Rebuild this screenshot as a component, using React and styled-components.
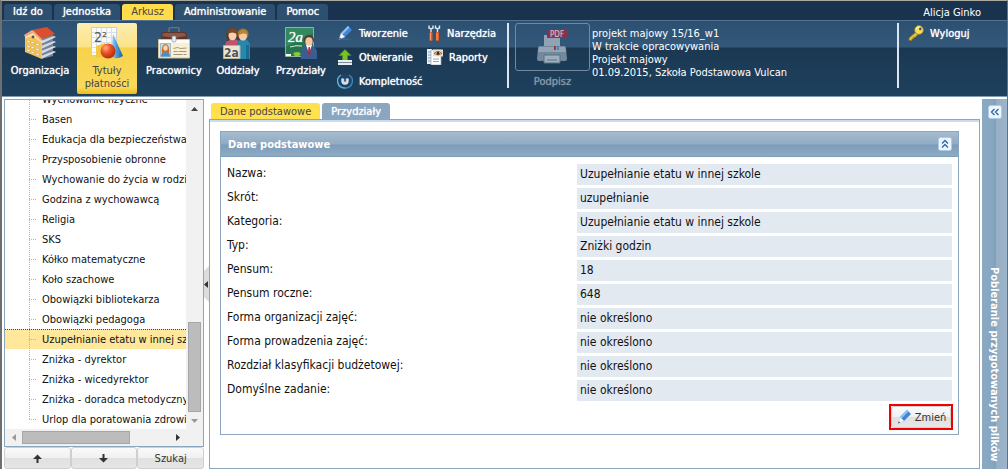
import React, { useState } from 'react'
import styled, { createGlobalStyle } from 'styled-components'

const menu = ['Idź do', 'Jednostka', 'Arkusz', 'Administrowanie', 'Pomoc']

const subjects = [
    'Wychowanie fizyczne',
    'Basen',
    'Edukacja dla bezpieczeństwa',
    'Przysposobienie obronne',
    'Wychowanie do życia w rodzinie',
    'Godzina z wychowawcą',
    'Religia',
    'SKS',
    'Kółko matematyczne',
    'Koło szachowe',
    'Obowiązki bibliotekarza',
    'Obowiązki pedagoga',
    'Uzupełnianie etatu w innej szkole',
    'Zniżka - dyrektor',
    'Zniżka - wicedyrektor',
    'Zniżka - doradca metodyczny',
    'Urlop dla poratowania zdrowia',
]

const details = [
    ['Nazwa:', 'Uzupełnianie etatu w innej szkole'],
    ['Skrót:', 'uzupełnianie'],
    ['Kategoria:', 'Uzupełnianie etatu w innej szkole'],
    ['Typ:', 'Zniżki godzin'],
    ['Pensum:', '18'],
    ['Pensum roczne:', '648'],
    ['Forma organizacji zajęć:', 'nie określono'],
    ['Forma prowadzenia zajęć:', 'nie określono'],
    ['Rozdział klasyfikacji budżetowej:', 'nie określono'],
    ['Domyślne zadanie:', 'nie określono'],
]

const BuildingIcon = () => (
    <svg width="32" height="32" viewBox="0 0 32 32">
        <path d="M17 11l12-3v21l-12 3z" fill="#76859a" />
        <path d="M17 14l13-5 2 1-15 7zM17 19l13-5 2 1-15 7zM17 24l13-5 2 1-15 7zM17 29l13-5 2 1-15 7z" fill="#d5dce3" />
        <path d="M1 8l8-3 9 8v19L1 25z" fill="#f3c45c" />
        <path d="M1 8l8-3 9 8v3L9 9 1 11z" fill="#ffe3a0" />
        <path d="M3 13l3 1v2l-3-1zM7 14l3 1v2l-3-1zM12 16l3 1v2l-3-1zM3 18l3 1v2l-3-1zM7 19l3 1v2l-3-1zM12 21l3 1v2l-3-1zM3 22l3 1v2l-3-1zM7 24l3 1v2l-3-1zM12 26l3 1v2l-3-1z" fill="#fffdf0" stroke="#b98e3a" strokeWidth=".4" />
        <circle cx="9" cy="10" r="1.4" fill="#5b5648" />
        <path d="M8 3L23 0l8 7-13 5-8-8z" fill="#d8502f" />
        <path d="M0 8l8-5 2 1 8 8-1 2-8-8-8 4z" fill="#f0a385" />
    </svg>
)

const MathIcon = () => (
    <svg width="32" height="32" viewBox="0 0 32 32">
        <defs>
            <radialGradient id="ball" cx=".35" cy=".3" r=".8">
                <stop offset="0" stopColor="#ffb08a" />
                <stop offset=".4" stopColor="#ee5526" />
                <stop offset="1" stopColor="#a3240c" />
            </radialGradient>
            <linearGradient id="cone">
                <stop offset="0" stopColor="#a9dcf7" />
                <stop offset=".5" stopColor="#4796d2" />
                <stop offset="1" stopColor="#1f5f9f" />
            </linearGradient>
        </defs>
        <path d="M.5.5h25v28H.5z" fill="#fafafa" stroke="#c9ced6" />
        <path d="M5.500 1v27M10.500 1v27M15.500 1v27M20.500 1v27M1 5.500h24M1 10.500h24M1 15.500h24M1 20.500h24M1 25.500h24" stroke="#d9dfe8" />
        <text x="3" y="15" fontFamily="DejaVu Sans Condensed" fontSize="14" fill="#555">2²</text>
        <path d="M5 19l9-3v13l-9 2z" fill="#f5c842" />
        <path d="M22 7l10 22q-6 4-12 1z" fill="url(#cone)" />
        <circle cx="17" cy="24" r="7.500" fill="url(#ball)" />
    </svg>
)

const StaffIcon = () => (
    <svg width="32" height="32" viewBox="0 0 32 32">
        <path d="M11 5V2q0-1.500 1.500-1.500h7Q21 .5 21 2v3" fill="none" stroke="#6b7078" strokeWidth="1.500" />
        <path d="M3 16V8q0-3 3-3h20q3 0 3 3v8z" fill="#5d352b" />
        <path d="M4 9q0-3 3-3h18q3 0 3 3l-12 2z" fill="#8a5748" />
        <path d="M.5 12.500h31v18.500H.5z" fill="#f8efd5" stroke="#d0c19a" />
        <path d="M1 13h30v3H1z" fill="#fffdf5" />
        <rect x="14" y="9" width="4" height="6" rx="1.500" fill="#e8edf4" stroke="#8290a5" strokeWidth=".7" />
        <path d="M2.500 16.500h10v13h-10z" fill="#b9dff5" stroke="#7d9ab0" strokeWidth=".6" />
        <path d="M4 27q-1-10 3.500-10T11 27z" fill="#c96b2c" />
        <ellipse cx="7.500" cy="21" rx="2.200" ry="2.800" fill="#f8d3b0" />
        <path d="M3 29.500q0-4.500 4.500-4.500t4.500 4.500z" fill="#4d8fc2" />
        <path d="M15.500 21.500l4-1 3 1 6-.5M15.500 24.500h4m1 0h8M15.500 27.500h9m1 0h3" stroke="#8b7e64" strokeWidth=".8" fill="none" />
    </svg>
)

const ClassIcon = () => (
    <svg width="32" height="32" viewBox="0 0 32 32">
        <path d="M3 20q0-8 8-8 7 0 7 8z" fill="#c2536c" />
        <path d="M15 31V18q1-6 6-6 7 0 7 8v12H18z" fill="#2688ad" />
        <path d="M24 18h3v14h-3z" fill="#1a6c92" />
        <circle cx="10.500" cy="6.500" r="6" fill="#6b4228" />
        <path d="M4 6h3v8H5zM14 6h3v7h-2z" fill="#5e3823" />
        <ellipse cx="10.500" cy="8.500" rx="4" ry="4.800" fill="#f6d3b0" />
        <path d="M6 7q1-5 5-5t4 5q-5-3-9 0z" fill="#7a4b2c" />
        <circle cx="21" cy="7" r="5.500" fill="#a8752e" />
        <ellipse cx="21" cy="9" rx="4" ry="4.700" fill="#f4cba4" />
        <path d="M17 8q1-5 4-5t5 5q-4-3-9 0z" fill="#bd8637" />
        <path d="M1.500 18.500h16.500v13H1.500z" fill="#e9e7d4" stroke="#b5b39d" />
        <text x="2" y="30" fontFamily="DejaVu Sans Condensed" fontWeight="bold" fontSize="12" fill="#4f5350">2a</text>
    </svg>
)

const BoardIcon = () => (
    <svg width="32" height="32" viewBox="0 0 32 32">
        <path d="M.5.500h28v29H.5z" fill="#25754f" stroke="#8eb59b" />
        <path d="M1 1h27v5L1 20z" fill="#33895f" />
        <text x="3" y="15" fontFamily="Liberation Serif" fontStyle="italic" fontSize="15" fill="#fff">2a</text>
        <path d="M5 20q6-2 12-1" stroke="#d6ecdf" fill="none" />
        <path d="M1 27h5v2H1z" fill="#fff" />
        <ellipse cx="12" cy="27" rx="3.500" ry="2" fill="#8fc63c" />
        <path d="M16 32V24q1-6 7.500-6t8.500 6v8z" fill="#3c5d94" />
        <path d="M21 18l3 8 3-8z" fill="#fff" />
        <path d="M23.500 20h1.500l.5 6-1.500 2-1-2z" fill="#b32b25" />
        <circle cx="24" cy="13" r="5" fill="#503a2d" />
        <ellipse cx="24" cy="14.500" rx="3.700" ry="4.300" fill="#f2c9a2" />
    </svg>
)

const PencilIcon = ({ shadow }) => (
    <svg width="16" height="16" viewBox="0 0 16 16">
        {shadow && <path d="M3 14.500q5-1.500 11-.5l-4 1.500z" fill="#2d6cb0" opacity=".8" />}
        <path d="M11 1l4 4-7 7-4-4z" fill="#3f86d8" />
        <path d="M11 1l1.500 1.500-7 7L4 8z" fill="#8fc3f5" />
        <path d="M4 8l4 4-6 2.500z" fill="#f6f8fa" stroke="#a9bccd" strokeWidth=".4" />
        <path d="M2.800 12.400L2 14.500l2.200-.9z" fill="#1f4680" />
    </svg>
)

const OpenIcon = () => (
    <svg width="16" height="16" viewBox="0 0 16 16">
        <path d="M8 .5l6 6h-3.500v5h-5v-5H2z" fill="#79c22c" stroke="#4d8f15" strokeWidth=".7" />
        <path d="M1 11h14v5H1z" fill="#e8edf2" />
        <path d="M1 13.500h14" stroke="#7d8b99" />
    </svg>
)

const PowerIcon = () => (
    <svg width="16" height="16" viewBox="0 0 16 16">
        <circle cx="8" cy="8" r="7" fill="#1c4468" />
        <path d="M4 2A7 7 0 0 0 8 15" fill="none" stroke="#5cb4e6" strokeWidth="1.400" />
        <path d="M12 2A7 7 0 0 1 8 15" fill="none" stroke="#3c88bd" strokeWidth="1.400" />
        <path d="M5 5.500v2.500a3 3 0 0 0 6 0V5.500" fill="#c9d3dc" stroke="#dfe6ec" strokeWidth="1.400" />
        <path d="M8 4v4.500" stroke="#1c4468" strokeWidth="1.600" />
    </svg>
)

const ToolsIcon = () => (
    <svg width="14" height="16" viewBox="0 0 14 16">
        <path d="M2 .5v2.500l2 1 2-1V.5M4 4v4M8.500 .5v2.500l2 1 2-1V.5M10.500 4v4" fill="none" stroke="#e3e8ed" strokeWidth="1.400" />
        <rect x="2.500" y="7" width="3" height="9" rx="1" fill="#ea5a22" />
        <rect x="9" y="7" width="3" height="9" rx="1" fill="#ea5a22" />
        <path d="M3.500 8v7M10 8v7" stroke="#ffac80" strokeWidth=".8" />
    </svg>
)

const ReportIcon = () => (
    <svg width="16" height="16" viewBox="0 0 16 16">
        <path d="M0 0h5v15H0z" fill="#eef1f4" />
        <path d="M1 3h3M1 6h3M1 9h3M1 12h3" stroke="#8a9bad" />
        <path d="M4 1h10v15H4z" fill="#fff" stroke="#9baaba" strokeWidth=".7" />
        <path d="M6 10h6M6 12.500h6" stroke="#9aa8b6" />
        <path d="M6 .5h10v7H6z" fill="#f0dcc0" />
        <path d="M7 4.500q4-4 8 0-4 3-8 0z" fill="#fff" stroke="#6b4a34" strokeWidth=".8" />
        <circle cx="11" cy="4.300" r="1.500" fill="#3f2a1d" />
    </svg>
)

const KeyIcon = () => (
    <svg width="16" height="16" viewBox="0 0 16 16">
        <path d="M8.500 6.500L1 13v2.500h3V14h1.500v-1.500H7L10.500 9z" fill="#e3bf35" stroke="#8f7113" strokeWidth=".7" />
        <circle cx="11" cy="5" r="4.400" fill="#f4dc5e" stroke="#9a7c1c" strokeWidth=".8" />
        <path d="M8 4q1-2.500 4-2" stroke="#fffbd0" fill="none" />
        <circle cx="12.300" cy="3.900" r="1.300" fill="#42586b" />
    </svg>
)

const PrinterIcon = () => (
    <svg width="34" height="36" viewBox="0 0 34 36">
        <path d="M8 5h16v12H8z" fill="#8fa3b4" />
        <path d="M2 18q0-2 2-2h24q2 0 2 2l1 11q0 2-2 2H3q-2 0-2-2z" fill="#74899c" />
        <path d="M3 17h26l1 5H2z" fill="#93a5b4" />
        <path d="M8 25h16v8H8z" fill="#9fafbc" stroke="#56708a" />
        <path d="M11 30h10" stroke="#56708a" />
        <path d="M18 16h2v4h-2z" fill="#a03548" />
        <path d="M21 16h2v4h-2z" fill="#3e8ab4" />
        <path d="M11 0h21v8H11z" fill="#8b3049" />
        <text x="14" y="7" fontFamily="DejaVu Sans Condensed" fontSize="8" fill="#cdb9c3">PDF</text>
    </svg>
)

const ChevronBox = ({ up }) => (
    <svg width="14" height="14" viewBox="0 0 14 14">
        <rect x=".5" y=".5" width="13" height="13" rx="2" fill="#eef5fd" stroke="#a9cbec" />
        <path
            d={up ? 'M4 6.500l3-3 3 3M4 10.500l3-3 3 3' : 'M6.500 4l-3 3 3 3M10.500 4l-3 3 3 3'}
            fill="none"
            stroke="#2f68a8"
            strokeWidth="1.400"
        />
    </svg>
)

const arrows = {
    up: 'M0 5l5-5 5 5z',
    down: 'M0 0h10L5 5z',
    left: 'M5 0v10L0 5z',
    right: 'M0 0l5 5-5 5z',
}

const Triangle = ({ dir, color }) => {
    const tall = dir === 'left' || dir === 'right'
    return (
        <svg width={tall ? 4 : 7} height={tall ? 7 : 4} viewBox={tall ? '0 0 5 10' : '0 0 10 5'} preserveAspectRatio="none">
            <path d={arrows[dir]} fill={color} />
        </svg>
    )
}

const BoldArrow = ({ down }) => (
    <svg width="9" height="9" viewBox="0 0 9 9">
        <path d={down ? 'M3.500 0h2v4H9L4.500 8.500 0 4h3.500z' : 'M3.500 9h2V5H9L4.500.5 0 5h3.500z'} fill="#333" />
    </svg>
)

const App = () => {
    const [selected, setSelected] = useState(12)

    return (
        <Window>
            <GlobalStyle />
            <MenuBar>
                {menu.map(name => (
                    <MenuTab key={name} $active={name === 'Arkusz'}>{name}</MenuTab>
                ))}
                <UserName>Alicja Ginko</UserName>
            </MenuBar>

            <Ribbon>
                <BigButton $width={74}><BuildingIcon />Organizacja</BigButton>
                <BigButton $width={60} $active><MathIcon />Tytuły płatności</BigButton>
                <BigButton $width={74}><StaffIcon />Pracownicy</BigButton>
                <BigButton $width={54}><ClassIcon />Oddziały</BigButton>
                <BigButton $width={72}><BoardIcon />Przydziały</BigButton>
                <ToolGrid>
                    <Tool><PencilIcon shadow />Tworzenie</Tool>
                    <Tool><ToolsIcon />Narzędzia</Tool>
                    <Tool><OpenIcon />Otwieranie</Tool>
                    <Tool><ReportIcon />Raporty</Tool>
                    <Tool><PowerIcon />Kompletność</Tool>
                </ToolGrid>
                <Divider />
                <SignButton disabled>
                    <SignFrame><PrinterIcon /></SignFrame>
                    Podpisz
                </SignButton>
                <ProjectInfo>
                    <div>projekt majowy 15/16_w1</div>
                    <div>W trakcie opracowywania</div>
                    <div>Projekt majowy</div>
                    <div>01.09.2015, Szkoła Podstawowa Vulcan</div>
                </ProjectInfo>
                <Divider />
                <Session>
                    <Tool><KeyIcon />Wyloguj</Tool>
                </Session>
            </Ribbon>

            <Workspace>
                <Sidebar>
                    <TreeFrame>
                        <Tree>
                            {subjects.map((name, i) => (
                                <Item key={name} $selected={i === selected} onClick={() => setSelected(i)}>
                                    <Branch $last={i === subjects.length - 1} />
                                    {name}
                                </Item>
                            ))}
                        </Tree>
                        <VerticalScroll>
                            <ArrowSlot><Triangle dir="up" color="#444" /></ArrowSlot>
                            <VerticalThumb />
                            <ArrowSlot><Triangle dir="down" color="#999" /></ArrowSlot>
                        </VerticalScroll>
                        <HorizontalScroll>
                            <ArrowSlot><Triangle dir="left" color="#999" /></ArrowSlot>
                            <HorizontalThumb />
                            <ArrowSlot><Triangle dir="right" color="#333" /></ArrowSlot>
                        </HorizontalScroll>
                        <ScrollCorner />
                    </TreeFrame>
                    <SidebarButtons>
                        <GreyButton aria-label="Do góry"><BoldArrow /></GreyButton>
                        <GreyButton aria-label="W dół"><BoldArrow down /></GreyButton>
                        <GreyButton>Szukaj</GreyButton>
                    </SidebarButtons>
                </Sidebar>

                <Splitter>
                    <SplitterHandle aria-label="Zwiń"><Triangle dir="left" color="#333" /></SplitterHandle>
                </Splitter>

                <Main>
                    <PageTabs>
                        <PageTab $active>Dane podstawowe</PageTab>
                        <PageTab>Przydziały</PageTab>
                    </PageTabs>
                    <Page>
                        <Panel>
                            <PanelHeader>
                                <h2>Dane podstawowe</h2>
                                <IconButton aria-label="Zwiń panel"><ChevronBox up /></IconButton>
                            </PanelHeader>
                            <Details>
                                {details.map(([label, value]) => (
                                    <Detail key={label}>
                                        <dt>{label}</dt>
                                        <dd>{value}</dd>
                                    </Detail>
                                ))}
                            </Details>
                            <PanelFooter>
                                <Highlight>
                                    <GreyButton><PencilIcon />Zmień</GreyButton>
                                </Highlight>
                            </PanelFooter>
                        </Panel>
                    </Page>
                </Main>

                <Downloads>
                    <IconButton aria-label="Rozwiń"><ChevronBox /></IconButton>
                    <DownloadsTitle>Pobieranie przygotowanych plików</DownloadsTitle>
                </Downloads>
            </Workspace>
        </Window>
    )
}

export default App


const GlobalStyle = createGlobalStyle`
    *{
        box-sizing: border-box;
    }

    body{
        margin: 0;
        background: #fff;
        color: #111;
        font: 11px/13px "DejaVu Sans Condensed", "Noto Sans", sans-serif;
    }

    button{
        margin: 0;
        padding: 0;
        border: 0;
        background: none;
        color: inherit;
        font: inherit;
        cursor: pointer;
    }

    svg{
        display: block;
        flex: none;
    }
`

const Window = styled.div`
    display: flex;
    flex-direction: column;
    height: 100vh;
    border: solid #6f6f6f;
    border-width: 1px 1px 0 2px;
    border-top-color: #a9a99f;
`

// Top menu
const MenuBar = styled.nav`
    display: flex;
    flex: none;
    align-items: flex-end;
    gap: 2px;
    height: 19px;
    padding: 0 26px 0 2px;
    background: #19334e;
`

const MenuTab = styled.button`
    height: 16px;
    padding: 0 9px 1px;
    border-radius: 3px 3px 0 0;
    background: ${props => props.$active ? '#ffdc4c' : '#2d5070'};
    color: ${props => props.$active ? '#444' : '#fff'};
    text-shadow: ${props => props.$active ? 'none' : '0 0 1px #fff'};
    white-space: nowrap;
`

const UserName = styled.span`
    margin-left: auto;
    padding-bottom: 1px;
    color: #fff;
`

// Ribbon
const Ribbon = styled.header`
    display: flex;
    flex: none;
    align-items: flex-start;
    height: 77px;
    padding: 2px 0 0 1px;
    border-top: 1px solid #55728e;
    border-bottom: 1px solid #7f9cb5;
    background: linear-gradient(#2c5072, #33587a 26px, #1b3852 27px, #1e415e);
    color: #fff;
`

const BigButton = styled.button`
    display: flex;
    flex: none;
    flex-direction: column;
    align-items: center;
    gap: 5px;
    width: ${props => props.$width}px;
    height: 71px;
    padding-top: 4px;
    border-radius: 2px;
    background: ${props => props.$active ? 'linear-gradient(#fdeeb0, #fbe387 24px, #f8d24a 25px, #f9d95c 64px, #f0bd10)' : 'none'};
    color: ${props => props.$active ? '#444' : '#fff'};
    text-shadow: ${props => props.$active ? 'none' : '0 0 1px #fff'};
`

const ToolGrid = styled.div`
    display: grid;
    flex: none;
    grid-template-columns: 90px 80px;
    grid-auto-rows: 24px;
    margin-top: -2px;
`

const Tool = styled.button`
    display: flex;
    align-items: center;
    gap: 6px;
    height: 24px;
    color: #fff;
    text-shadow: 0 0 1px #fff;
    white-space: nowrap;
`

const Divider = styled.div`
    flex: none;
    width: 2px;
    height: 65px;
    background: #dbe6ef;
`

const SignButton = styled.button`
    display: flex;
    flex: none;
    flex-direction: column;
    gap: 4px;
    align-items: center;
    margin-left: 6px;
    color: #8496a6;
    text-shadow: 0 0 1px #8496a6;
`

const SignFrame = styled.span`
    display: flex;
    justify-content: center;
    width: 75px;
    height: 48px;
    padding-top: 6px;
    border: 1px solid #7389a0;
    border-radius: 3px;
`

const ProjectInfo = styled.div`
    flex: 1;
    min-width: 0;
    padding: 4px 2px;
    overflow: hidden;
    white-space: nowrap;
`

const Session = styled.div`
    flex: none;
    width: 108px;
    margin-top: -2px;
    padding-left: 9px;
`

// Workspace
const Workspace = styled.div`
    display: flex;
    flex: 1;
    min-height: 0;
    padding: 2px 0 0 2px;
`

const Sidebar = styled.aside`
    display: flex;
    flex: none;
    flex-direction: column;
    width: 200px;
`

const TreeFrame = styled.div`
    display: grid;
    flex: 1;
    grid-template: minmax(0, 1fr) 17px / minmax(0, 1fr) 17px;
    min-height: 0;
    border: 1px solid #8ba7c0;
`

const Tree = styled.ul`
    display: flex;
    flex-direction: column;
    justify-content: flex-end;
    margin: 0;
    padding: 0;
    overflow: hidden;
    list-style: none;
`

const Item = styled.li`
    display: flex;
    flex: none;
    align-items: center;
    height: 20px;
    border-top: 1px ${props => props.$selected ? 'dotted #444' : 'solid transparent'};
    background: ${props => props.$selected ? '#ffe79b' : 'none'};
    white-space: nowrap;
    cursor: pointer;
`

const Branch = styled.span`
    flex: none;
    align-self: stretch;
    width: 7px;
    margin: 0 6px 0 24px;
    background:
        repeating-linear-gradient(#b5b5b5 0 1px, transparent 1px 2px) 0 0 / 1px ${props => props.$last ? '10px' : '100%'} no-repeat,
        repeating-linear-gradient(to right, #b5b5b5 0 1px, transparent 1px 2px) 0 9px / 7px 1px no-repeat;
`

const VerticalScroll = styled.div`
    display: flex;
    flex-direction: column;
    align-items: center;
    background: #f1f1f1;
`

const HorizontalScroll = styled.div`
    display: flex;
    align-items: center;
    background: #f1f1f1;
`

const ArrowSlot = styled.span`
    display: flex;
    flex: none;
    align-items: center;
    justify-content: center;
    width: 17px;
    height: 17px;
`

const VerticalThumb = styled.div`
    width: 13px;
    height: 90px;
    margin-top: auto;
    border: 1px solid #a6a6a6;
    background: #bcbcbc;
`

const HorizontalThumb = styled.div`
    width: 108px;
    height: 13px;
    margin-right: auto;
    border: 1px solid #a6a6a6;
    background: #bcbcbc;
`

const ScrollCorner = styled.div`
    background: #f1f1f1;
`

const GreyButton = styled.button`
    display: flex;
    align-items: center;
    justify-content: center;
    gap: 3px;
    height: 22px;
    border: 1px solid #cfcfcf;
    border-radius: 3px;
    background: linear-gradient(#fafafa, #f0f0f0 50%, #e0e0e0 51%, #e6e6e6);
    color: #333;
`

const SidebarButtons = styled.div`
    display: grid;
    grid-template-columns: repeat(3, 1fr);
`

const Splitter = styled.div`
    display: flex;
    flex: none;
    align-items: center;
    width: 5px;
`

const SplitterHandle = styled.button`
    width: 5px;
    height: 36px;
    background: #dcdcdc;
    clip-path: polygon(0 5px, 100% 0, 100% 100%, 0 31px);
`

// Page
const Main = styled.main`
    display: flex;
    flex: 1;
    flex-direction: column;
    min-width: 0;
    padding-top: 4px;
`

const PageTabs = styled.div`
    display: flex;
    gap: 2px;
    padding-left: 2px;
`

const PageTab = styled.button`
    height: 16px;
    padding: 0 9px;
    border-radius: 3px 3px 0 0;
    background: ${props => props.$active ? '#ffe04d' : '#8ba7c0'};
    color: ${props => props.$active ? '#444' : '#fff'};
    text-shadow: ${props => props.$active ? 'none' : '0 0 1px #fff'};
`

const Page = styled.div`
    flex: 1;
    min-height: 0;
    padding: 11px 20px 20px 10px;
    border: 1px solid #8ba7c0;
    box-shadow: inset 0 2px #c9dcf0;
`

const Panel = styled.section`
    border: 1px solid #8ba7c0;
`

const PanelHeader = styled.div`
    display: flex;
    align-items: center;
    justify-content: space-between;
    height: 25px;
    padding: 0 6px 0 7px;
    border-bottom: 1px solid #7c9cb8;
    background: linear-gradient(#a6bccf, #90abc3 12px, #7b9cb9 13px, #8fabc4);

    h2{
        margin: 0;
        color: #fff;
        font-size: 11px;
    }
`

const IconButton = styled.button`
    flex: none;
`

const Details = styled.dl`
    display: grid;
    gap: 3px;
    margin: 0;
    padding: 7px 6px 3px;
    font-size: 12px;
`

const Detail = styled.div`
    display: grid;
    grid-template-columns: 14fr 15fr;
    line-height: 21px;

    dt{
        line-height: 18px;
    }

    dd{
        margin: 0;
        padding: 0 3px;
        background: #e2e9f1;
    }
`

const PanelFooter = styled.div`
    display: flex;
    justify-content: flex-end;
    padding: 0 5px 4px;
`

const Highlight = styled.div`
    border: 2px solid #f00000;

    ${GreyButton}{
        width: 60px;
    }
`

// Collapsed downloads panel
const Downloads = styled.aside`
    display: flex;
    flex: none;
    flex-direction: column;
    align-items: center;
    justify-content: space-between;
    width: 25px;
    margin-left: 2px;
    padding: 6px 0 7px;
    background: linear-gradient(to right, #8ba9c2, #86a5bf 12px, #7797b5 13px, #96afc6 14px, #9db4c9);
`

const DownloadsTitle = styled.span`
    color: #fff;
    font-weight: bold;
    writing-mode: vertical-rl;
    white-space: nowrap;
`
